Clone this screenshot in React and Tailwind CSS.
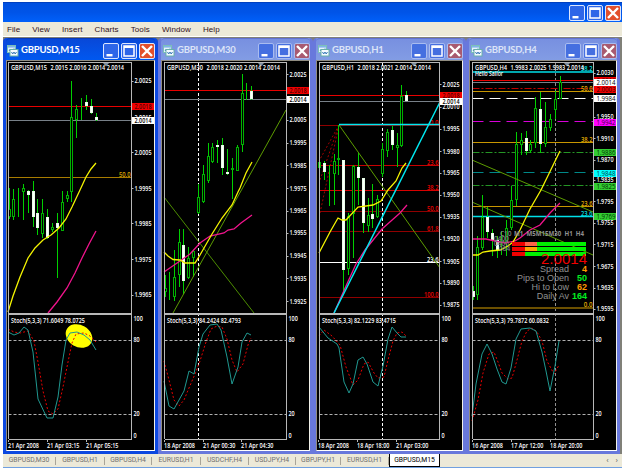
import React from 'react';

const LIME = '#00d000';
const RED = '#e80000';
const GOLD = '#c89600';
const CYAN = '#00e0e8';

// candle: [x, high, low, bodyTop, bodyBottom, filled]
const charts = [
    {
        title: 'GBPUSD,M15', active: true, width: 'w-[155px]', x: 7, w: 147, left: 8.5, right: 131.5,
        quote: '2.0015 2.0016 2.0014 2.0014', marker: 106,
        ticks: [[81, '2.0025'], [117.5, '2.0015'], [152.5, '2.0005'], [188.5, '1.9995'], [223.5, '1.9985'], [259.5, '1.9975'], [295, '1.9965']],
        tags: [[106, '2.0018', '#f00000', '#500000'], [120.5, '2.0014', '#fff', '#000']],
        levels: [[106.5, RED, '', ''], [120.5, '#788088', '', ''], [177.5, '#a87c00', '50.0', '#d8a400']],
        candles: [
            [9, 188, 219, 209, 217], [13.5, 189, 220, 199, 217], [18.5, 188, 217], [23.5, 184, 220, 188, 192], [28.5, 190, 213, 191, 195, 1],
            [33, 181, 227, 191, 217, 1], [37.7, 199, 235, 213, 228, 1], [42.5, 199, 238, 213, 234], [47.5, 209, 239, 217, 238, 1],
            [52.5, 223, 232, 227, 230], [57.5, 213, 278, 223, 228, 1], [62.5, 191, 231, 202, 231], [67, 191, 202, 195, 199],
            [71.5, 81, 202, 117, 192], [76.5, 105, 138, 109, 120], [81.5, 98, 120], [86.5, 95, 110, 102, 106, 1], [91.5, 99, 114, 106, 113, 1], [96.5, 113, 121, 117, 120, 1],
        ],
        yellow: '8,312 13,296 20,277 28,258 35,248 43,240 51,235 59,228 66,219 72,207 80,190 86,177 91,169 96,163',
        pink: '48,313 57,302 67,288 75,273 82,258 89,244 96,231',
        stoch: '71.6049 78.0725',
        main: '8,332 14,335 19,333 24,327 28,330 33,352 38,399 47,418 53,418 58,397 62,365 66,340 70,333 77,332 84,335 90,340 96,350',
        signal: '8,329 14,332 20,333 28,331 34,341 38,362 43,391 48,411 53,414 58,409 63,387 68,362 72,343 76,334 84,333 90,336 96,342',
        dates: [[8, '21 Apr 2008'], [47, '21 Apr 03:15'], [86, '21 Apr 05:15']],
    },
    {
        title: 'GBPUSD,M30', width: 'w-[155px]', x: 162, w: 147, left: 164.5, right: 286.5, day: 198.5,
        quote: '2.0018 2.0020 2.0014 2.0014', marker: 261,
        ticks: [[74.5, '2.0025'], [120, '2.0005'], [143, '1.9995'], [165.5, '1.9985'], [188.5, '1.9975'], [211, '1.9965'], [233, '1.9955'], [256, '1.9945'], [278.5, '1.9935'], [301.5, '1.9925']],
        tags: [[90, '2.0018', '#f00000', '#500000'], [99, '2.0014', '#fff', '#000']],
        levels: [[90.5, RED, '', ''], [99.5, '#788088', '', '']],
        candles: [
            [165, 275, 297, 288, 292], [169.5, 272, 300], [174, 250, 301, 277, 297], [179, 229, 287, 242, 275], [183.5, 229, 294, 245, 281, 1],
            [188.5, 247, 279, 258, 278], [193.5, 250, 277, 251, 258], [198.5, 184, 214, 197, 213], [203.3, 165, 203, 174, 202],
            [208, 143, 183, 156, 181], [212.5, 143, 163, 147, 162], [217.5, 140, 163, 145, 147, 1], [222.5, 138, 175, 145, 168, 1],
            [227.5, 149, 175, 172, 174, 1], [232.5, 158, 199, 168, 170], [237.5, 145, 171, 147, 171], [242, 74, 152, 93, 145], [246.5, 83, 100], [251.5, 86, 100, 91, 99, 1],
        ],
        trends: [['164,197 254,313', '#4c8c00'], ['173,313 286,110', '#5c9c00']],
        yellow: '164,252 168,256 173,259.5 180,260 185,263 195,263 200,255 212,234 222,218 232,205 238,192 240,188 246,173 252,162',
        pink: '164,272 180,261 190,254 200,243 210,236 224,233 228,230 234,229 241,223 252,215',
        stoch: '84.2424 82.4793',
        main: '164,381 169,406 174,409 184,391 189,371 194,374 199,347 203,334 210,325 217,324 221,330 227,357 232,384 238,367 242,342 247,333 251,335',
        signal: '164,361 169,380 174,400 179,406 184,400 189,388 195,374 200,361 206,342 211,329 217,326 222,327 227,339 232,360 237,372 243,364 248,345 251,338',
        dates: [[164, '18 Apr 2008'], [203, '21 Apr 00:30'], [241, '21 Apr 04:30']],
    },
    {
        title: 'GBPUSD,H1', width: 'w-[153px]', x: 317, w: 145, left: 319.5, right: 439.5, day: 382.5,
        quote: '2.0018 2.0021 2.0014 2.0014', marker: 414,
        ticks: [[84.5, '2.0025'], [107, '2.0010'], [129, '1.9995'], [151.5, '1.9980'], [173, '1.9965'], [195, '1.9950'], [217, '1.9935'], [239, '1.9920'], [261.5, '1.9905'], [283, '1.9890'], [305, '1.9875']],
        tags: [[95, '2.0018', '#f00000', '#500000'], [101, '2.0014', '#fff', '#000']],
        levels: [
            [95.5, RED, '', ''], [101.5, '#788088', '', ''], [125.5, '#900000', '0.0', RED], [165.5, '#c80000', '23.6', RED], [190.5, '#d80000', '38.2', RED],
            [211.5, '#900000', '50.0', RED], [231.5, '#900000', '61.8', RED], [262.5, '#fff', '23.6', '#fff'], [297.5, '#900000', '100.0', RED],
        ],
        candles: [
            [319.5, 140, 170, 162, 168], [324.5, 161, 180, 163, 172, 1], [329.5, 165, 206], [334, 154, 205, 161, 174], [338.5, 125, 175, 158, 160],
            [343.5, 160, 293, 160, 270, 1], [348.5, 213, 275, 216, 269], [353.5, 165, 258, 166, 214], [358.5, 153, 205, 167, 178, 1],
            [363, 178, 233, 178, 223, 1], [368, 198, 232, 215, 226], [372.5, 184, 228, 214, 219, 1], [377.5, 195, 218, 199, 217],
            [382.5, 143, 177, 149, 174], [387.5, 129, 157, 132, 151], [392.2, 126, 150, 130, 145, 1], [397, 133, 167, 145, 148], [401.5, 85, 147, 96, 146], [406.5, 91, 101, 95, 101, 1],
        ],
        fans: ['339,125 319,161', '339,125 320,180', '339,125 320,213'],
        trends: [['339,125 440,268', '#5c9c00']],
        yellow: '319,253 330,232 338,218 342,220 346,220 358,207 373,205 381,201 388,190 396,181 402,168 406,163',
        pink: '334,313 346,286 356,264 365,250 382,229 391,221 400,213 407,205',
        cyan: ['339,124.5 440,124.5', '334,313 440,102'],
        stoch: '82.1229 83.4715',
        main: '319,327 328,338 337,344 339,348 344,382 349,393 353,384 358,360 363,357 367,364 373,382 378,386 383,366 388,339 392,327 397,333 401,337 406,337',
        signal: '319,336 324,330 332,336 340,345 346,367 353,385 358,380 364,364 368,362 374,373 378,378 384,377 388,360 393,341 397,333 402,332 406,336',
        dates: [[318, '18 Apr 2008'], [357, '18 Apr 18:00'], [396, '21 Apr 03:00']],
    },
    {
        title: 'GBPUSD,H4', width: 'w-[154px]', x: 470, w: 146, left: 472.5, right: 593.5, day: 555.5, dayColor: '#909090',
        quote: '1.9983 2.0025 1.9983 2.0014', marker: 567,
        ticks: [[73, '2.0030'], [117, '1.9950'], [138.5, '1.9910'], [160, '1.9870'], [180, '1.9835'], [201.5, '1.9795'], [223, '1.9755'], [244.5, '1.9715'], [266.5, '1.9675'], [288, '1.9635'], [309, '1.9595']],
        tags: [
            [80, '2.0018', '#f00000', '#500000'], [82.5, '2.0014', '#fff', '#000'], [89.5, '2.0003', '#f00000', '#300000'], [98.5, '1.9984', '#fff', '#000'], [122, '1.9942', '#ff00ff', '#400040'],
            [152.5, '1.9886', '#32cd32', '#003000'], [173.5, '1.9848', '#00ffff', '#004040'], [186, '1.9825', '#32cd32', '#003000'], [216, '1.9769', '#32cd32', '#003000'],
        ],
        levels: [
            [72, CYAN, '38.2', CYAN, '', 1.6], [80.5, RED, '', ''], [82.5, '#788088', '', ''], [88.5, '#c00000', '', '', '7 2 2 2'], [91.5, GOLD, '50.0', '#e0aa00'],
            [98.5, '#fff', '', '', '11 6'], [121.5, '#d800d8', '', '', '11 6'], [142.5, GOLD, '38.2', '#e0aa00'], [152.5, '#259525', '', '', '7 2 2 2'],
            [172.5, '#008888', '', '', '11 6'], [185.5, '#259525', '', '', '7 2 2 2'], [206.5, GOLD, '23.6', '#e0aa00'], [216.5, CYAN, '23.6', CYAN, '', 1.6], [308, '#6c5000', '0.0', '#e0aa00', '', 2],
        ],
        candles: [
            [473, 286, 300, 291, 297, 1], [477.5, 236, 300, 247, 295], [482.5, 195, 250, 217, 248], [487.5, 207, 238, 217, 232, 1], [492, 229, 256, 233, 240, 1],
            [497, 236, 258, 240, 250, 1], [501.5, 231, 255], [506.5, 220, 256, 228, 243], [511.5, 186, 230, 200, 228], [516.5, 132, 206, 144, 200],
            [521, 133, 155, 140, 145], [526, 131, 155, 138, 151, 1], [530.5, 140, 153, 144, 151], [535.5, 97, 148, 108, 143], [540.5, 92, 153, 109, 144, 1],
            [545.5, 102, 147, 127, 144], [550.5, 114, 131, 119, 128], [555, 91, 119, 99, 110], [560, 76, 99, 82, 99],
        ],
        trends: [['472,160 593,212', '#5c9c00'], ['472,202 593,255', '#5c9c00']],
        yellow: '472,255 478,255 483,252 490,251 500,250 508,246 513,242 520,230 530,209 541,190 560,151',
        pink: '472,239 486,239 495,241 505,243 515,241 520,238 530,230 540,225 550,213 560,203',
        stoch: '79.7872 60.0832',
        main: '472,416 476,384 482,354 487,344 492,354 497,369 502,382 506,384 511,368 516,339 521,329 530,328 536,331 542,352 546,371 550,391 555,366 559,341',
        signal: '472,421 478,400 483,373 489,354 494,352 498,362 502,373 508,379 512,378 517,360 522,341 527,331 532,328 537,332 542,341 547,361 554,374 559,365',
        dates: [[472, '16 Apr 2008'], [511, '17 Apr 12:00'], [550, '18 Apr 20:00']],
    },
];

const stats = [['Spread', '4', '#ff9a00', 271.5], ['Pips to Open', '50', '#00f020', 280.5], ['Hi to Low', '62', '#ff9a00', 289.5], ['Daily Av', '164', '#00f020', 298.5]];

// text squeezed to a fixed width, glyphs included
const Label = ({ w, ...props }) => <text textLength={w} lengthAdjust="spacingAndGlyphs" {...props} />;

const WindowButton = ({ kind, dim }) => (
    <svg viewBox="0 0 16 16" className="h-4 w-4 shrink-0">
        <rect
            x="0.5" y="0.5" width="15" height="15" rx="1.5"
            fill={kind === 'close' ? (dim ? '#a85a70' : '#e2502c') : (dim ? '#456fe0' : '#2e66e8')}
            stroke={dim ? '#a9bcf0' : '#dce6ff'}
        />
        {kind === 'min' && <rect x="3.5" y="11" width="6" height="2.4" fill="#fff" />}
        {kind === 'max' && <path d="M3 3h10v10H3z M3 4.2h10" fill="none" stroke="#fff" strokeWidth="1.5" />}
        {kind === 'close' && <path d="M3 3l10 10m0-10l-10 10" stroke="#fff" strokeWidth="2.4" />}
    </svg>
);

const WindowButtons = ({ dim }) => (
    <div className="flex gap-[2px]">
        <WindowButton kind="min" dim={dim} />
        <WindowButton kind="max" dim={dim} />
        <WindowButton kind="close" dim={dim} />
    </div>
);

const ChartIcon = () => (
    <svg viewBox="0 0 12 12" className="h-3 w-3 shrink-0">
        <rect x="0.5" y="0.5" width="8" height="7" fill="#e8f4ff" stroke="#7cc0b8" />
        <rect x="1" y="1" width="7" height="1.6" fill="#7fb4e8" />
        <path d="M2 6l1.5-2 1.5 1.5L7 3.5" stroke="#3878b8" fill="none" />
        <rect x="3" y="4.5" width="8" height="6.5" fill="#f4faff" stroke="#68b0a8" />
        <path d="M4.5 7l1.2 2L7 7l1.2 2L9.5 7" stroke="#3878b8" fill="none" />
    </svg>
);

const Candle = ({ data: [x, high, low, top, bottom, filled] }) => {
    const cx = Math.floor(x) + 0.5;
    return (
        <g shapeRendering="crispEdges">
            <line x1={cx} x2={cx} y1={high} y2={low} stroke={LIME} />
            {top && <rect x={cx - 1} y={top + 0.5} width="2" height={Math.max(bottom - top - 1, 1)} fill={filled ? '#fff' : '#000'} stroke={filled ? '#e8ffe8' : '#00b000'} />}
        </g>
    );
};

const Dashboard = () => (
    <g>
        <g fill="#808080" fontSize="6.5">
            <text x="500" y="236">C10</text>
            <text x="494" y="241">0400</text>
            <text x="494" y="246">0400</text>
            <text x="499" y="251">084</text>
        </g>
        <Label x="514" y="235.5" w="70" fill="#909090" fontSize="6.5" fontWeight="bold" className="whitespace-pre">M1  M5M15M30  H1  H4</Label>
        {[[242, '#ff6347'], [247, '#ffa500'], [252, '#00f000']].map(([y, mid]) => (
            <g key={y} shapeRendering="crispEdges">
                <rect x="512" y={y} width="13" height="4" fill="#f00000" />
                <rect x="525" y={y} width="12" height="4" fill={mid} />
                <rect x="537" y={y} width="49" height="4" fill="#00f000" />
            </g>
        ))}
        <g className="font-['Liberation_Sans',sans-serif]" fontWeight="normal">
            <text x="541" y="264" textLength="46" fontSize="15" fill="#f00000">2.0014</text>
            {stats.map(([label, value, color, y]) => (
                <g key={label} fontSize="9">
                    <text x="569" y={y} textAnchor="end" fill="#909090">{label}</text>
                    <text x="587" y={y} textAnchor="end" fill={color} fontWeight="bold">{value}</text>
                </g>
            ))}
        </g>
    </g>
);

const Chart = ({ chart: c }) => {
    const axis = c.right;
    const wide = c.title === 'GBPUSD,H4';
    return (
        <svg viewBox={`${c.x} 61 ${c.w} 389`} preserveAspectRatio="xMinYMin meet" className="block min-h-0 w-full flex-1 bg-black font-['Open_Sans','Noto_Sans',sans-serif]" fontSize="6.8" fontWeight="600">
            {c.day && <line x1={c.day} x2={c.day} y1="63" y2="439" stroke={c.dayColor || '#fff'} strokeDasharray="3 2" />}
            {(c.fans || []).map((p) => <polyline key={p} points={p} fill="none" stroke="#a00000" strokeDasharray="2 2" />)}
            {c.levels.map(([y, color, label, labelColor, dash, w], i) => (
                <g key={i}>
                    <line x1={c.left} x2={axis} y1={y} y2={y} stroke={color} strokeWidth={w || 1} strokeDasharray={dash || undefined} />
                    {label && <Label x={axis - 1} y={y - 1} w={label.length * 2.9} textAnchor="end" fill={labelColor}>{label}</Label>}
                </g>
            ))}
            {c.candles.map((d) => <Candle key={d[0]} data={d} />)}
            <g fill="none">
                {(c.trends || []).map(([p, color]) => <polyline key={p} points={p} stroke={color} />)}
                <polyline points={c.pink} stroke="#f0148c" strokeWidth="1.3" />
                {(c.cyan || []).map((p) => <polyline key={p} points={p} stroke="#00e8f0" strokeWidth="1.5" />)}
                <polyline points={c.yellow} stroke="#f4f400" strokeWidth="1.3" />
            </g>
            {wide && <Dashboard />}

            {/* stochastic pane */}
            <g stroke="#b0b0b0" strokeDasharray="3 2">
                <line x1={c.left} x2={axis} y1="340.5" y2="340.5" />
                <line x1={c.left} x2={axis} y1="414.5" y2="414.5" />
            </g>
            {c.active && <ellipse cx="79" cy="336" rx="14" ry="11" transform="rotate(30 79 336)" fill="#ff0" />}
            <polyline points={c.signal} fill="none" stroke="#e80000" strokeDasharray="2 2" />
            <polyline points={c.main} fill="none" stroke="#209890" />

            {/* frame */}
            <g stroke="#b8b8b8" shapeRendering="crispEdges">
                <line x1={c.left - 1} x2={axis} y1="62.5" y2="62.5" />
                <line x1={c.left} x2={c.left} y1="62" y2="439" />
                <line x1={axis} x2={axis} y1="62" y2="440" />
                <line x1={c.left} x2={axis} y1="314" y2="314" strokeWidth="2" />
                <line x1={c.left} x2={axis} y1="439.5" y2="439.5" />
            </g>
            <path d={`M${c.marker - 3} 63h6l-3 3.5z`} fill="#8090a0" />
            <g fill="#fff">
                <Label x={c.left + 2.5} y="69.8" w={c.title.length === 10 ? 36 : 32}>{c.title}</Label>
                <Label x={c.left + (c.title.length === 10 ? 42 : 38)} y="69.8" w="73.5">{c.quote}</Label>
                {wide && <Label x="475" y="75.8" w="28">Hello Sailor</Label>}
                <Label x={c.left + 2.5} y="323" w="74">{`Stoch(5,3,3) ${c.stoch}`}</Label>
                {c.ticks.map(([y, label]) => (
                    <g key={label}>
                        <line x1={axis} x2={axis + 2} y1={Math.floor(y) + 0.5} y2={Math.floor(y) + 0.5} stroke="#b8b8b8" />
                        <Label x={axis + 3} y={y + 2.4} w="17">{label}</Label>
                    </g>
                ))}
                {[['100', 321], ['80', 342], ['20', 416], ['0', 437.5]].map(([label, y]) => <Label key={label} x={axis + 2} y={y} w={label.length * 3.1}>{label}</Label>)}
                {c.dates.map(([x, label]) => (
                    <g key={label}>
                        <line x1={x + 0.5} x2={x + 0.5} y1="440" y2="442" stroke="#b8b8b8" />
                        <Label x={x} y="447.5" w={label.length > 11 ? 32.5 : 31}>{label}</Label>
                    </g>
                ))}
            </g>
            {c.tags.map(([y, label, bg, fg]) => (
                <g key={label}>
                    <rect x={axis + 0.5} y={Math.round(y - 3.5)} width="22.5" height="7" fill={bg} shapeRendering="crispEdges" />
                    <Label x={axis + 3} y={y + 2.5} fill={fg} fontWeight={wide ? 400 : 600} fontSize={wide ? 7.2 : 6.8} w={wide ? 19 : 17}>{label}</Label>
                </g>
            ))}
        </svg>
    );
};

const ChartWindow = ({ chart }) => (
    <div className={`flex h-[416px] shrink-0 flex-col rounded-t-[4px] border-x-[3px] border-b-[3px] ${chart.width} ${chart.active ? 'border-[#0c48e0] bg-[#0050e8]' : 'border-[#6878dc] bg-[#7f98e2]'}`}>
        <div className={`flex h-[22px] shrink-0 items-center rounded-t-[4px] border-t pt-[2px] ${chart.active ? 'border-[#0838b8] bg-gradient-to-b from-[#0848d8] to-[#0058f0] pl-px' : 'border-[#6070d0] bg-gradient-to-b from-[#7890e0] to-[#829ce4] pl-[2px]'}`}>
            <ChartIcon />
            <span className={`ml-[2px] flex-1 whitespace-nowrap font-['Lato',sans-serif] text-[9.5px] font-bold tracking-[-0.2px] ${chart.active ? 'text-white' : 'text-[#dce4f8]'}`}>{chart.title}</span>
            <WindowButtons dim={!chart.active} />
        </div>
        <div className="flex min-h-0 flex-1 flex-col border-t border-r border-b border-l border-t-[#908c80] border-r-[#f0f0e8] border-b-white border-l-[#908c80]">
            <Chart chart={chart} />
        </div>
    </div>
);

const tabs = [
    ['GBPUSD,M30', 'w-[53px]'], ['GBPUSD,H1', 'w-[49px]'], ['GBPUSD,H4', 'w-[47px]'], ['EURUSD,H1', 'w-[49px]'],
    ['USDCHF,H4', 'w-[48px]'], ['USDJPY,H4', 'w-[47px]'], ['GBPJPY,H1', 'w-[45px]'], ['EURUSD,H1', 'w-[48px]'],
];

export default function App() {
    return (
        <div className="h-[470px] w-[625px] overflow-hidden bg-white pt-[2px] pl-[3px] font-['Liberation_Sans',Arial,sans-serif]">
            <div className="flex h-[466px] w-[619px] flex-col border-b border-[#70a0e0] bg-[#ece9d8]">
                <div className="flex h-5 shrink-0 items-center justify-end border-t border-[#0040c0] bg-gradient-to-b from-[#0050e0] via-[#0054e8] to-[#0060fa] pr-px">
                    <WindowButtons />
                </div>
                <nav className="flex h-[15px] shrink-0 items-center gap-3 border-b border-white pt-px pl-1 text-[8px] text-[#301020]">
                    {['File', 'View', 'Insert', 'Charts', 'Tools', 'Window', 'Help'].map((item) => <span key={item} className="tracking-[0.1px]">{item}</span>)}
                </nav>
                <main className="flex h-[417px] shrink-0 border-t border-[#808078] bg-[#808078]">
                    {charts.map((chart) => <ChartWindow key={chart.title} chart={chart} />)}
                </main>
                <footer className="flex min-h-0 flex-1 items-center font-['Roboto',sans-serif] text-[6.8px] text-[#707070]">
                    {tabs.map(([label, width], i) => (
                        <div key={i} className={`flex h-2 shrink-0 items-center justify-center border-r border-[#a8a498] ${width}`}>{label}</div>
                    ))}
                    <div className="flex h-full w-[51px] shrink-0 items-center justify-center border-x border-b border-black bg-white text-black">GBPUSD,M15</div>
                    <div className="flex flex-1 justify-end gap-[7px] pr-1 text-[8px] text-[#606060]"><span>‹</span><span>›</span></div>
                </footer>
            </div>
        </div>
    );
}
